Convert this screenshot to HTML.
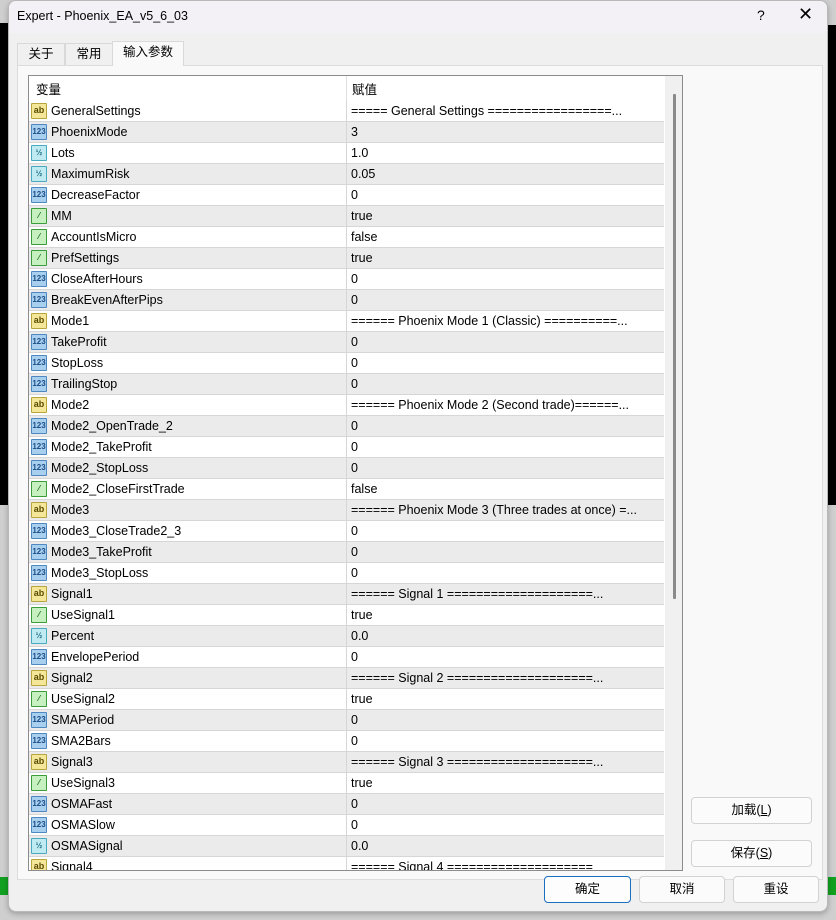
<!DOCTYPE html>
<html><head><meta charset="utf-8"><style>
*{margin:0;padding:0;box-sizing:border-box}
body{width:836px;height:920px;position:relative;overflow:hidden;background:#cfcfcf;font-family:"Liberation Sans","Noto Sans CJK SC",sans-serif;font-size:12.5px;color:#000}
.abs{position:absolute}
.win{left:8px;top:0;width:820px;height:912px;background:#f0f0f0;border:1px solid #b8b8b8;border-radius:8px;overflow:hidden;box-shadow:0 2px 6px rgba(0,0,0,.25)}
.title{left:0;top:0;width:820px;height:32px;background:#f3f1f6}
.tab{top:42px;height:22px;border:1px solid #d9d9d9;border-bottom:none;background:#f0f0f0;font-size:12.5px;line-height:21px;text-align:center}
.panel{left:8px;top:64px;width:806px;height:815px;background:#f9f9f9;border:1px solid #dcdcdc}
.list{left:19px;top:74px;width:655px;height:796px;background:#fff;border:1px solid #8c8c8c;overflow:hidden}
.hdr{left:0;top:0;width:636px;height:25px;background:#fff}
.row{position:absolute;left:0;width:635px;height:21px;border-bottom:1px solid #d6d6d6}
.row.g{background:#ebebeb}
.row span.n{position:absolute;left:22px;top:3px;white-space:nowrap}
.row span.v{position:absolute;left:322px;top:3px;white-space:nowrap;width:312px;overflow:hidden}
.row .sep{position:absolute;left:317px;top:0;width:1px;height:21px;background:#d6d6d6}
.ic{position:absolute;left:2px;top:2px;width:16px;height:16px;border:1px solid;border-radius:1px;font-size:8px;line-height:13px;text-align:center;font-weight:bold;overflow:hidden}
.ab{background:#f4e79a;border-color:#b8a53c;color:#5a4a00;font-size:9px}
.n1{background:#a9cfee;border-color:#4d88c0;color:#1b4f88}
.h{background:#bfeaf2;border-color:#48a9bf;color:#1b6d84}
.b{background:#c6f0c0;border-color:#3a9c3a;color:#1a6a1a}
.btn{height:27px;border:1px solid #d2d2d2;border-radius:4px;background:#fbfbfb;text-align:center;line-height:25px;font-size:12.5px}
</style></head><body>
<div class="abs" style="left:0;top:23px;width:8px;height:482px;background:#000"></div>
<div class="abs" style="left:828px;top:25px;width:8px;height:480px;background:#000"></div>
<div class="abs" style="left:0;top:877px;width:8px;height:18px;background:#13a020"></div>
<div class="abs" style="left:828px;top:877px;width:8px;height:18px;background:#13a020"></div>
<div class="abs win">
 <div class="abs title"></div>
 <div class="abs" style="left:8px;top:8px;font-size:12.5px">Expert - Phoenix_EA_v5_6_03</div>
 <div class="abs" style="left:748px;top:6px;font-size:14px">?</div>
 <div class="abs" style="left:789px;top:3px;font-size:18px;font-weight:300">✕</div>
 <div class="abs tab" style="left:8px;width:48px">关于</div>
 <div class="abs tab" style="left:56px;width:48px">常用</div>
 <div class="abs tab" style="left:103px;top:40px;height:25px;width:72px;background:#f9f9f9;z-index:2">输入参数</div>
 <div class="abs panel"></div>
 <div class="abs list">
  <div class="abs hdr"><span class="abs" style="left:7px;top:3px">变量</span><span class="abs" style="left:323px;top:3px">赋值</span><div class="abs" style="left:317px;top:0;width:1px;height:25px;background:#e0e0e0"></div></div>
  <div id="rows"></div>
  <div class="abs" style="left:636px;top:0;width:18px;height:796px;background:#f0f0f0"></div>
  <div class="abs" style="left:644px;top:18px;width:3px;height:505px;background:#8a8a8a;border-radius:1px"></div>
 </div>
 <div class="abs btn" style="left:682px;top:796px;width:121px">加载(<u>L</u>)</div>
 <div class="abs btn" style="left:682px;top:839px;width:121px">保存(<u>S</u>)</div>
 <div class="abs btn" style="left:535px;top:875px;width:87px;border:1px solid #1a6fc0;background:#fdfdfd">确定</div>
 <div class="abs btn" style="left:630px;top:875px;width:86px">取消</div>
 <div class="abs btn" style="left:724px;top:875px;width:86px">重设</div>
</div>
<script>
var d=[["ab","GeneralSettings","===== General Settings =================..."],
["n1","PhoenixMode","3"],["h","Lots","1.0"],["h","MaximumRisk","0.05"],["n1","DecreaseFactor","0"],
["b","MM","true"],["b","AccountIsMicro","false"],["b","PrefSettings","true"],["n1","CloseAfterHours","0"],
["n1","BreakEvenAfterPips","0"],["ab","Mode1","====== Phoenix Mode 1 (Classic) ==========..."],
["n1","TakeProfit","0"],["n1","StopLoss","0"],["n1","TrailingStop","0"],
["ab","Mode2","====== Phoenix Mode 2 (Second trade)======..."],["n1","Mode2_OpenTrade_2","0"],
["n1","Mode2_TakeProfit","0"],["n1","Mode2_StopLoss","0"],["b","Mode2_CloseFirstTrade","false"],
["ab","Mode3","====== Phoenix Mode 3 (Three trades at once) =..."],["n1","Mode3_CloseTrade2_3","0"],
["n1","Mode3_TakeProfit","0"],["n1","Mode3_StopLoss","0"],["ab","Signal1","====== Signal 1 ====================..."],
["b","UseSignal1","true"],["h","Percent","0.0"],["n1","EnvelopePeriod","0"],
["ab","Signal2","====== Signal 2 ====================..."],["b","UseSignal2","true"],["n1","SMAPeriod","0"],
["n1","SMA2Bars","0"],["ab","Signal3","====== Signal 3 ====================..."],["b","UseSignal3","true"],
["n1","OSMAFast","0"],["n1","OSMASlow","0"],["h","OSMASignal","0.0"],["ab","Signal4","====== Signal 4 ===================="]];
var lab={ab:"ab",n1:"123",h:"½",b:"⁄"};
var h="";d.forEach(function(r,i){h+='<div class="row'+(i%2?' g':'')+'" style="top:'+(25+21*i)+'px"><span class="ic '+r[0]+'">'+lab[r[0]]+'</span><span class="n">'+r[1]+'</span><div class="sep"></div><span class="v">'+r[2]+'</span></div>';});
document.getElementById("rows").innerHTML=h;
</script>
</body></html>
